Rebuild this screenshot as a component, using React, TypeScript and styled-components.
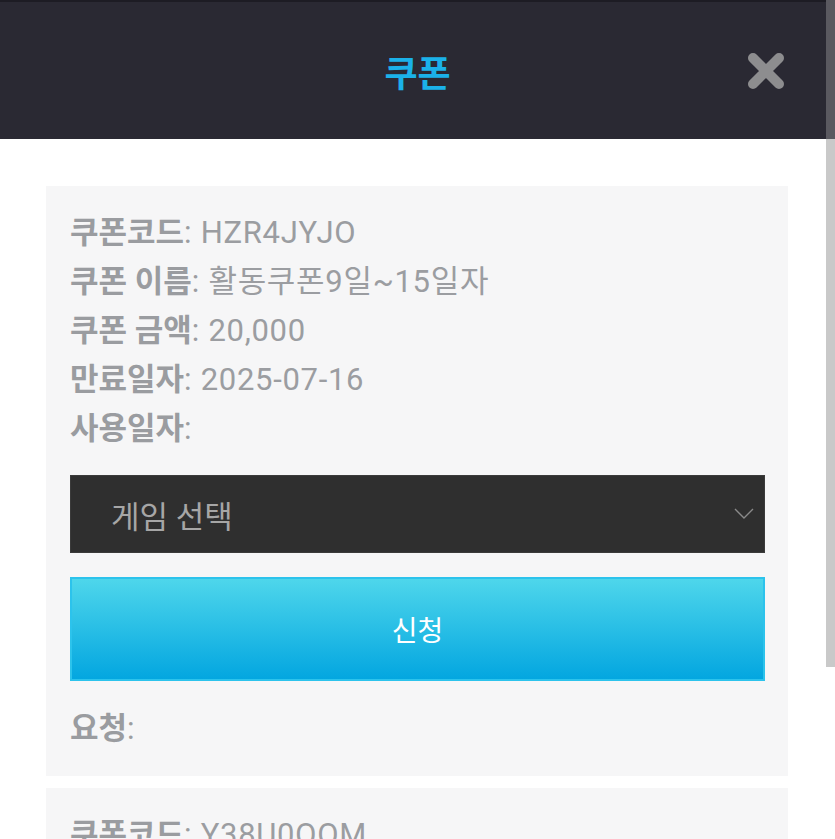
import styled, { createGlobalStyle } from 'styled-components';

const GlobalStyle = createGlobalStyle`
	html, body {
		margin: 0;
		padding: 0;
		background: #ffffff;
		font-family: Roboto, "Noto Sans CJK KR", sans-serif;
	}
	* {
		box-sizing: border-box;
	}
`;

type Coupon = {
	code: string;
	name?: string;
	amount?: string;
	expires?: string;
};

const coupons: Coupon[] = [
	{ code: 'HZR4JYJO', name: '활동쿠폰9일~15일자', amount: '20,000', expires: '2025-07-16' },
	{ code: 'Y38U0QOM' },
];

const CloseIcon = () => (
	<svg width="40" height="40" viewBox="0 0 40 40">
		<path d="M7 7 L33 33 M33 7 L7 33" stroke="#8d8d8f" strokeWidth="10" strokeLinecap="round" />
	</svg>
);

const Chevron = () => (
	<svg width="20" height="12" viewBox="0 0 20 12">
		<path d="M1 1 L10 10 L19 1" stroke="#8a8a8a" strokeWidth="1.4" fill="none" />
	</svg>
);

const Field = ({ label, value }: { label: string; value?: string }) => (
	<Line>
		<Label>{label}</Label>: {value}
	</Line>
);

const CouponCard = ({ coupon }: { coupon: Coupon }) => (
	<Card>
		<Field label="쿠폰코드" value={coupon.code} />
		<Field label="쿠폰 이름" value={coupon.name} />
		<Field label="쿠폰 금액" value={coupon.amount} />
		<Field label="만료일자" value={coupon.expires} />
		<Field label="사용일자" />
		<Select>
			<span>게임 선택</span>
			<Chevron />
		</Select>
		<ApplyButton>신청</ApplyButton>
		<Field label="요청" />
	</Card>
);

const App = () => (
	<>
		<GlobalStyle />
		<Page>
			<Header>
				<Title>쿠폰</Title>
				<CloseButton>
					<CloseIcon />
				</CloseButton>
			</Header>
			<List>
				{coupons.map((c) => (
					<CouponCard key={c.code} coupon={c} />
				))}
			</List>
			<ScrollTrack />
		</Page>
	</>
);

export default App;

const Page = styled.div`
	position: relative;
	width: 835px;
	height: 839px;
	overflow: hidden;
	background: #ffffff;
`;

const Header = styled.header`
	position: relative;
	height: 139px;
	display: flex;
	align-items: center;
	justify-content: center;
	background: #2a2933;
	border-top: 2px solid #1d1c24;
`;

const Title = styled.h1`
	margin: 0;
	font-size: 36px;
	font-weight: 700;
	color: #1bb1e9;
	letter-spacing: 0;
`;

const CloseButton = styled.div`
	position: absolute;
	right: 49px;
	top: 49px;
	display: flex;
`;

const List = styled.div`
	display: flex;
	flex-direction: column;
	gap: 12px;
	padding: 47px 47px 0 46px;
`;

const Card = styled.section`
	display: flex;
	flex-direction: column;
	background: #f6f6f7;
	padding: 22px 23px 23px 24px;
`;

const Line = styled.div`
	font-size: 31px;
	line-height: 49px;
	height: 49px;
	color: #9b9da1;
	letter-spacing: 0.7px;
	white-space: nowrap;
`;

const Label = styled.b`
	font-weight: 700;
	color: #9a9ca0;
	letter-spacing: 0;
`;

const Select = styled.div`
	margin: 22px 0 24px;
	height: 78px;
	display: flex;
	align-items: center;
	justify-content: space-between;
	padding: 0 10px 0 40px;
	background: #2f2f2f;
	border: 1px solid #3b3b3b;
	font-size: 31px;
	color: #a6a6a6;
`;

const ApplyButton = styled.button`
	height: 104px;
	margin-bottom: 23px;
	border: 2px solid #2cc3ec;
	background: linear-gradient(to bottom, #4ed6eb, #03a6e0);
	color: #ffffff;
	font-family: Roboto, "Noto Sans CJK KR", sans-serif;
	font-size: 28px;
	cursor: pointer;
`;

const ScrollTrack = styled.div`
	position: absolute;
	top: 0;
	right: 0;
	width: 9px;
	height: 667px;
	background: linear-gradient(to bottom, #5a5960 0, #5a5960 139px, #c9c9c9 139px, #c9c9c9 100%);
`;
